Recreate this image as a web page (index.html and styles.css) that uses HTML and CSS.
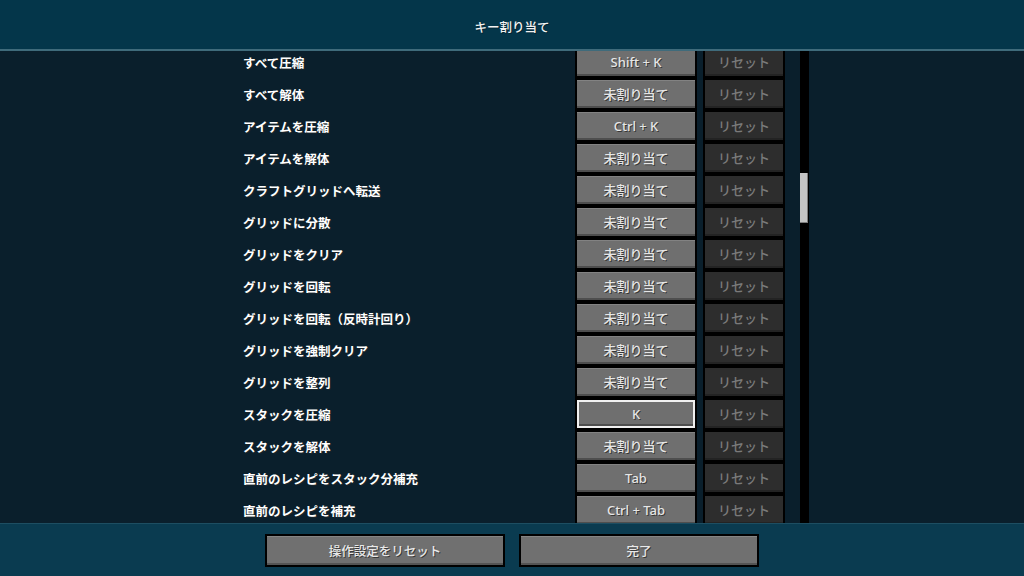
FILE: index.html
```html
<!DOCTYPE html>
<html lang="ja">
<head>
<meta charset="utf-8">
<title>キー割り当て</title>
<link rel="stylesheet" href="styles.css">
</head>
<body>
<div class="screen">
  <header class="header"><h1 class="title">キー割り当て</h1></header>
  <main class="list">
    <div class="rows">
      <div class="row"><span class="label">すべて圧縮</span><span class="key">Shift + K</span><span class="reset">リセット</span></div>
      <div class="row"><span class="label">すべて解体</span><span class="key">未割り当て</span><span class="reset">リセット</span></div>
      <div class="row"><span class="label">アイテムを圧縮</span><span class="key">Ctrl + K</span><span class="reset">リセット</span></div>
      <div class="row"><span class="label">アイテムを解体</span><span class="key">未割り当て</span><span class="reset">リセット</span></div>
      <div class="row"><span class="label">クラフトグリッドへ転送</span><span class="key">未割り当て</span><span class="reset">リセット</span></div>
      <div class="row"><span class="label">グリッドに分散</span><span class="key">未割り当て</span><span class="reset">リセット</span></div>
      <div class="row"><span class="label">グリッドをクリア</span><span class="key">未割り当て</span><span class="reset">リセット</span></div>
      <div class="row"><span class="label">グリッドを回転</span><span class="key">未割り当て</span><span class="reset">リセット</span></div>
      <div class="row"><span class="label">グリッドを回転（反時計回り）</span><span class="key">未割り当て</span><span class="reset">リセット</span></div>
      <div class="row"><span class="label">グリッドを強制クリア</span><span class="key">未割り当て</span><span class="reset">リセット</span></div>
      <div class="row"><span class="label">グリッドを整列</span><span class="key">未割り当て</span><span class="reset">リセット</span></div>
      <div class="row"><span class="label">スタックを圧縮</span><span class="key selected">K</span><span class="reset">リセット</span></div>
      <div class="row"><span class="label">スタックを解体</span><span class="key">未割り当て</span><span class="reset">リセット</span></div>
      <div class="row"><span class="label">直前のレシピをスタック分補充</span><span class="key">Tab</span><span class="reset">リセット</span></div>
      <div class="row"><span class="label">直前のレシピを補充</span><span class="key">Ctrl + Tab</span><span class="reset">リセット</span></div>
    </div>
    <div class="scrollbar"><div class="thumb"></div></div>
  </main>
  <footer class="footer">
    <button class="btn">操作設定をリセット</button>
    <button class="btn">完了</button>
  </footer>
</div>
</body>
</html>
```
FILE: styles.css
```css
* { box-sizing: border-box; }
html, body { margin: 0; padding: 0; }
body {
  width: 1024px;
  height: 576px;
  overflow: hidden;
  font-family: "Noto Sans", "Noto Sans CJK JP", sans-serif;
  font-size: 12.5px;
  color: #ffffff;
  background: #0a1f2c;
}
.screen {
  display: flex;
  flex-direction: column;
  height: 576px;
}
.header {
  height: 51px;
  flex: none;
  background: #04364a;
  border-bottom: 2px solid #3f6b7b;
  display: flex;
  align-items: center;
  justify-content: center;
}
.title {
  margin: 0;
  font-size: 12.5px;
  font-weight: 500;
  color: #f2f2f2;
  padding-top: 3px;
  text-shadow: 1px 1px 0 rgba(0,0,0,0.35);
}
.list {
  flex: 1;
  display: flex;
  overflow: hidden;
  padding-left: 243px;
  background: #0a1f2c;
}
.rows {
  width: 557px;
  margin-top: -5px;
  display: flex;
  flex-direction: column;
}
.row {
  display: flex;
  align-items: center;
  height: 32px;
  flex: none;
}
.label {
  width: 332px;
  font-weight: 600;
  color: #ffffff;
  text-shadow: 1px 1px 0 rgba(40,40,40,0.6);
}
.key {
  width: 122px;
  height: 32px;
  border: 2px solid #000;
  background: #6f6f6f;
  box-shadow: inset 0 -2px 0 #4e4e4e, inset 0 1px 0 #828282;
  color: #e6e6e6;
  display: flex;
  align-items: center;
  justify-content: center;
  font-weight: 500;
  font-size: 13px;
  padding-bottom: 1px;
  text-shadow: 1px 1px 0 rgba(30,30,30,0.7);
}
.key.selected {
  border-color: #000;
  box-shadow: inset 0 0 0 2px #f0f0f0, inset 0 -4px 0 #4e4e4e;
}
.reset {
  width: 82px;
  height: 32px;
  margin-left: 6px;
  border: 2px solid #000;
  background: #2d2d2d;
  box-shadow: inset 0 -2px 0 #232323;
  color: #7a7a7a;
  display: flex;
  align-items: center;
  justify-content: center;
  font-weight: 500;
  font-size: 13px;
  padding-bottom: 1px;
}
.scrollbar {
  width: 9px;
  flex: none;
  background: #000;
}
.thumb {
  margin-top: 122px;
  height: 50px;
  width: 8px;
  background: #c4c4c4;
  box-shadow: inset -1px -1px 0 #7d7d7d;
}
.footer {
  height: 53px;
  flex: none;
  background: #0a3b50;
  border-top: 1px solid #1d4e62;
  display: flex;
  align-items: center;
  justify-content: center;
  gap: 14px;
  padding-top: 1px;
}
.btn {
  width: 240px;
  height: 33px;
  border: 2px solid #000;
  background: #707070;
  box-shadow: inset 0 -2px 0 #545454, inset 0 1px 0 #858585;
  color: #e8e8e8;
  font-family: "Noto Sans", "Noto Sans CJK JP", sans-serif;
  font-size: 12.5px;
  font-weight: 500;
  padding: 0 0 1px 0;
  text-shadow: 1px 1px 0 rgba(30,30,30,0.7);
}
```
